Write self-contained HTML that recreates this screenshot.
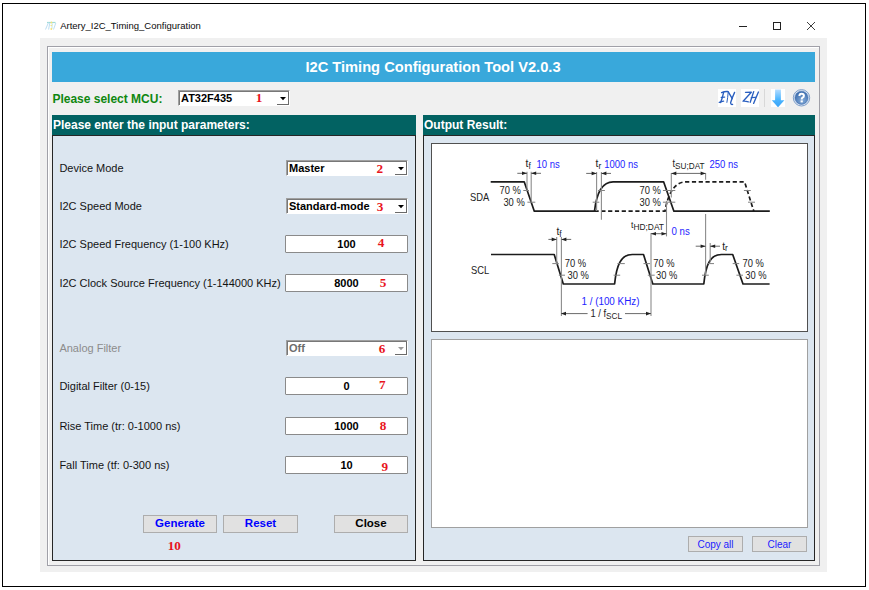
<!DOCTYPE html>
<html><head><meta charset="utf-8"><style>
html,body{margin:0;padding:0;}
body{width:869px;height:590px;overflow:hidden;position:relative;background:#fff;font-family:"Liberation Sans",sans-serif;}
.b{position:absolute;}
.t{position:absolute;white-space:nowrap;}
</style></head><body>
<div class="b" style="left:2px;top:3px;width:864px;height:584px;border:1px solid #000;background:#fff;box-sizing:border-box;"></div>
<svg class="b" style="left:0;top:0" width="869" height="590" viewBox="0 0 869 590" opacity="0.75">
<path d="M47 22.5 H55.5" stroke="#7fd0c8" stroke-width="1.2"/>
<path d="M48.5 22.5 L45.5 29.5 M49.8 23 L48.6 29.5" stroke="#a8d4ee" stroke-width="1"/>
<path d="M55.8 23 L53.5 29.5" stroke="#a8d4ee" stroke-width="1"/>
<path d="M52.3 23.5 L51.8 29" stroke="#9ad8d0" stroke-width="0.8"/>
<circle cx="51.4" cy="22.5" r="0.9" fill="#f4d84a"/><circle cx="51.2" cy="25.5" r="0.7" fill="#f4d84a"/><circle cx="51.3" cy="29" r="0.9" fill="#f4d84a"/>
</svg>
<div class="t" style="left:60.2px;top:21.46px;font-size:9.5px;line-height:9.5px;color:#0a0a0a;font-weight:normal;font-family:'Liberation Sans', sans-serif;">Artery_I2C_Timing_Configuration</div>
<div class="b" style="left:739px;top:26px;width:8px;height:1px;background:#222;"></div>
<div class="b" style="left:773px;top:22px;width:8px;height:8px;border:1px solid #222;box-sizing:border-box;"></div>
<svg class="b" style="left:806px;top:21px" width="10" height="10" viewBox="0 0 10 10">
<path d="M1 1 L9 9 M9 1 L1 9" stroke="#2a2a2a" stroke-width="0.9" fill="none"/></svg>
<div class="b" style="left:40px;top:38px;width:787px;height:534px;background:#f0f0f0;"></div>
<div class="b" style="left:47px;top:46px;width:773px;height:520px;border:1px solid #a0a0a8;box-sizing:border-box;box-shadow:inset 1px 1px 0 #fff;"></div>
<div class="b" style="left:52px;top:52px;width:763px;height:30px;background:#39a8db;"></div>
<div class="t" style="left:133px;width:600px;text-align:center;top:60.08px;font-size:14.67px;line-height:14.67px;color:#fff;font-weight:bold;font-family:'Liberation Sans', sans-serif;">I2C Timing Configuration Tool V2.0.3</div>
<div class="t" style="left:52.4px;top:93.04px;font-size:12px;line-height:12px;color:#0f870f;font-weight:bold;font-family:'Liberation Sans', sans-serif;">Please select MCU:</div>
<div class="b" style="left:178px;top:90px;width:112px;height:16px;background:#fff;border-top:1px solid #a0a0a0;border-left:1px solid #a0a0a0;border-right:1px solid #fff;border-bottom:1px solid #fff;box-sizing:border-box;box-shadow:inset 1px 1px 0 #787878;"></div>
<div class="b" style="left:277px;top:92px;width:12px;height:13px;border-right:1px solid #6a6a6a;border-bottom:1px solid #6a6a6a;box-sizing:border-box;"></div>
<svg class="b" style="left:280px;top:97px" width="6" height="4" viewBox="0 0 6 4"><path d="M0 0 H6 L3 3.2 Z" fill="#000"/></svg>
<div class="t" style="left:181px;top:92.69px;font-size:11px;line-height:11px;color:#000;font-weight:bold;font-family:'Liberation Sans', sans-serif;">AT32F435</div>
<div class="b" style="left:718px;top:89px;width:18px;height:18px;background:#fff;"></div>
<div class="b" style="left:741px;top:89px;width:18px;height:18px;background:#fff;"></div>
<svg class="b" style="left:0;top:0" width="869" height="590" viewBox="0 0 869 590"><g stroke="#2a5fc0" stroke-width="1.35" fill="none" stroke-linecap="round" stroke-linejoin="round">
<path d="M721.6 92.6 Q724.5 91.3 727.6 91.5"/>
<path d="M723.6 92.4 Q722.6 97.5 720.6 102.6"/>
<path d="M721.3 97.4 L724.6 97.1"/>
<path d="M719.3 102.4 Q721.5 101.6 723.6 101.1"/>
<path d="M728.2 92.0 Q727.8 97.5 726.9 102.4" stroke-width="1"/>
<path d="M728.3 91.8 Q730.5 95.5 732.2 98.6"/>
<path d="M734.6 92.4 Q732.2 97.5 730.6 102.8 Q730.8 104.8 732.6 104.4"/>
<path d="M745.5 92.3 L751.3 92.2 L743.1 101.2 Q745.5 101 748.3 101.8"/>
<path d="M753.7 91.6 L750.2 102.3"/>
<path d="M758.4 92 L753.6 103.4"/>
<path d="M751.3 97.6 L755.4 97.3"/>
</g></svg>
<div class="b" style="left:764px;top:89px;width:1px;height:18px;background:#d8d8d8;"></div>
<div class="b" style="left:771px;top:89px;width:14px;height:18px;background:#fff;"></div>
<svg class="b" style="left:771px;top:89px" width="14" height="18" viewBox="0 0 14 18">
<defs><linearGradient id="ag" x1="0" y1="0" x2="0" y2="1"><stop offset="0" stop-color="#b4dcff"/><stop offset="0.55" stop-color="#4cb6ff"/><stop offset="1" stop-color="#3aa2f6"/></linearGradient></defs>
<path d="M4.1 0.6 H9.9 V11.2 H13.4 L7.0 18.3 L0.8 11.2 H4.1 Z" fill="url(#ag)"/></svg>
<svg class="b" style="left:792px;top:88px" width="19" height="20" viewBox="0 0 19 20">
<defs><radialGradient id="hg" cx="0.55" cy="0.7" r="0.75"><stop offset="0" stop-color="#86acd8"/><stop offset="1" stop-color="#3264a8"/></radialGradient></defs>
<circle cx="9.5" cy="9.8" r="8.2" fill="#dde6f2" stroke="#7f9fca" stroke-width="1"/>
<circle cx="9.5" cy="9.8" r="6.6" fill="url(#hg)" stroke="#3f6cae" stroke-width="0.5"/>
<path d="M7.4 8.1 Q7.4 5.7 9.6 5.7 Q11.9 5.7 11.9 7.7 Q11.9 9.0 10.6 9.6 Q9.7 10.1 9.7 11.4" stroke="#fff" stroke-width="2" fill="none"/>
<rect x="8.6" y="12.4" width="2.2" height="2" fill="#fff"/></svg>
<div class="b" style="left:52px;top:115px;width:364px;height:20px;background:#026262;"></div>
<div class="t" style="left:53px;top:118.84px;font-size:12px;line-height:12px;color:#fff;font-weight:bold;font-family:'Liberation Sans', sans-serif;">Please enter the input parameters:</div>
<div class="b" style="left:52px;top:135px;width:364px;height:426px;background:#dce6f0;border:1px solid #262626;box-sizing:border-box;"></div>
<div class="b" style="left:423px;top:115px;width:392px;height:20px;background:#026262;"></div>
<div class="t" style="left:424px;top:118.84px;font-size:12px;line-height:12px;color:#fff;font-weight:bold;font-family:'Liberation Sans', sans-serif;">Output Result:</div>
<div class="b" style="left:423px;top:135px;width:392px;height:426px;background:#dce6f0;border:1px solid #262626;box-sizing:border-box;"></div>
<div class="b" style="left:431px;top:143px;width:377px;height:189px;background:#fff;border:1px solid #505050;box-sizing:border-box;"></div>
<svg class="b" style="left:0;top:0" width="869" height="590" viewBox="0 0 869 590"><path d="M490.7 181.8 H524.2 L534.3 211.2 H594.5 C596.5 193 602 181.8 613.1 181.8 H663.6 L673.9 211.2 H769.8" stroke="#1c1c1c" stroke-width="1.7" fill="none" stroke-linejoin="round"/>
<path d="M594.5 211.2 H665 C667.5 196 673.5 181.8 686 181.8 H744.6 L753.8 211.2" stroke="#1c1c1c" stroke-width="1.7" fill="none" stroke-dasharray="4.2 2.6"/>
<path d="M491 254.5 H554.2 L563.3 284 H614.6 C616.5 265 621 254.5 632.3 254.5 H643.5 L652.8 284 H703.8 C705.7 265 710 254.5 721.5 254.5 H732.7 L743 284 H769.6" stroke="#1c1c1c" stroke-width="1.7" fill="none" stroke-linejoin="round"/>
<path d="M523.3 190.5 H529" stroke="#808080" stroke-width="1"/>
<path d="M527.4 202.2 H535.3" stroke="#808080" stroke-width="1"/>
<path d="M598 190.5 H604.9" stroke="#808080" stroke-width="1"/>
<path d="M592.7 202.2 H599.3" stroke="#808080" stroke-width="1"/>
<path d="M662.9 190.5 H675.3" stroke="#808080" stroke-width="1"/>
<path d="M662.9 202.2 H675.3" stroke="#808080" stroke-width="1"/>
<path d="M743.9 190.5 H750.8" stroke="#808080" stroke-width="1"/>
<path d="M748 202.2 H755" stroke="#808080" stroke-width="1"/>
<path d="M552.3 263.6 H558.8" stroke="#808080" stroke-width="1"/>
<path d="M558.8 275.2 H565" stroke="#808080" stroke-width="1"/>
<path d="M617.4 263.6 H624.8" stroke="#808080" stroke-width="1"/>
<path d="M613.6 275.2 H620.2" stroke="#808080" stroke-width="1"/>
<path d="M643.5 263.6 H650" stroke="#808080" stroke-width="1"/>
<path d="M647.8 275.2 H654.7" stroke="#808080" stroke-width="1"/>
<path d="M707.5 263.6 H714" stroke="#808080" stroke-width="1"/>
<path d="M702 275.2 H708.8" stroke="#808080" stroke-width="1"/>
<path d="M732.7 263.6 H739.2" stroke="#808080" stroke-width="1"/>
<path d="M736.4 275.2 H743" stroke="#808080" stroke-width="1"/>
<path d="M527 171.8 V190.5" stroke="#8c8c8c" stroke-width="1.1"/>
<path d="M531.2 171.8 V202.5" stroke="#8c8c8c" stroke-width="1.1"/>
<path d="M596.6 172 V211" stroke="#8c8c8c" stroke-width="1.1"/>
<path d="M601.4 172 V219.7" stroke="#8c8c8c" stroke-width="1.1"/>
<path d="M671.3 173 V197.4" stroke="#8c8c8c" stroke-width="1.1"/>
<path d="M705.6 173 V179.8" stroke="#8c8c8c" stroke-width="1.1"/>
<path d="M666.5 201 V236.4" stroke="#8c8c8c" stroke-width="1.1"/>
<path d="M651 233.1 V316" stroke="#8c8c8c" stroke-width="1.1"/>
<path d="M556.7 237 V265" stroke="#8c8c8c" stroke-width="1.1"/>
<path d="M561.4 237 V316" stroke="#8c8c8c" stroke-width="1.1"/>
<path d="M705.6 214 V275" stroke="#8c8c8c" stroke-width="1.1"/>
<path d="M710.2 243 V262.5" stroke="#8c8c8c" stroke-width="1.1"/>
<path d="M517.3 173.3 H527" stroke="#6a6a6a" stroke-width="1"/>
<path d="M527 173.3 L522 171.5 L522 175.10000000000002 Z" fill="#222"/>
<path d="M541 173.3 H531.2" stroke="#6a6a6a" stroke-width="1"/>
<path d="M531.2 173.3 L536.2 171.5 L536.2 175.10000000000002 Z" fill="#222"/>
<path d="M586.2 173.4 H596.6" stroke="#6a6a6a" stroke-width="1"/>
<path d="M596.6 173.4 L591.6 171.6 L591.6 175.20000000000002 Z" fill="#222"/>
<path d="M611 173.4 H601.4" stroke="#6a6a6a" stroke-width="1"/>
<path d="M601.4 173.4 L606.4 171.6 L606.4 175.20000000000002 Z" fill="#222"/>
<path d="M548.4 239.4 H556.7" stroke="#6a6a6a" stroke-width="1"/>
<path d="M556.7 239.4 L551.7 237.6 L551.7 241.20000000000002 Z" fill="#222"/>
<path d="M571.2 239.4 H561.4" stroke="#6a6a6a" stroke-width="1"/>
<path d="M561.4 239.4 L566.4 237.6 L566.4 241.20000000000002 Z" fill="#222"/>
<path d="M695.7 246.2 H705.6" stroke="#6a6a6a" stroke-width="1"/>
<path d="M705.6 246.2 L700.6 244.39999999999998 L700.6 248.0 Z" fill="#222"/>
<path d="M720 246.2 H710.2" stroke="#6a6a6a" stroke-width="1"/>
<path d="M710.2 246.2 L715.2 244.39999999999998 L715.2 248.0 Z" fill="#222"/>
<path d="M671.3 173.4 H705.6" stroke="#6a6a6a" stroke-width="1"/>
<path d="M671.3 173.4 L676.3 171.6 L676.3 175.20000000000002 Z" fill="#222"/>
<path d="M705.6 173.4 L700.6 171.6 L700.6 175.20000000000002 Z" fill="#222"/>
<path d="M651 233.7 H666.5" stroke="#6a6a6a" stroke-width="1"/>
<path d="M651 233.7 L656 231.89999999999998 L656 235.5 Z" fill="#222"/>
<path d="M666.5 233.7 L661.5 231.89999999999998 L661.5 235.5 Z" fill="#222"/>
<path d="M561 313.6 H587.6 M625 313.6 H651" stroke="#6a6a6a" stroke-width="1"/>
<path d="M561 313.6 L566 311.8 L566 315.40000000000003 Z" fill="#222"/>
<path d="M651 313.6 L646 311.8 L646 315.40000000000003 Z" fill="#222"/>
<text transform="translate(470 201.2) scale(1 1.12)" font-size="9.4" fill="#222222" font-family="Liberation Sans, sans-serif">SDA</text>
<text transform="translate(471 273.8) scale(1 1.12)" font-size="9.4" fill="#222222" font-family="Liberation Sans, sans-serif">SCL</text>
<text transform="translate(499.5 193.9) scale(1 1.12)" font-size="9.4" fill="#222222" font-family="Liberation Sans, sans-serif">70 %</text>
<text transform="translate(503.4 206) scale(1 1.12)" font-size="9.4" fill="#222222" font-family="Liberation Sans, sans-serif">30 %</text>
<text transform="translate(639.5 194) scale(1 1.12)" font-size="9.4" fill="#222222" font-family="Liberation Sans, sans-serif">70 %</text>
<text transform="translate(639.5 206) scale(1 1.12)" font-size="9.4" fill="#222222" font-family="Liberation Sans, sans-serif">30 %</text>
<text transform="translate(564.7 267.2) scale(1 1.12)" font-size="9.4" fill="#222222" font-family="Liberation Sans, sans-serif">70 %</text>
<text transform="translate(567.5 279) scale(1 1.12)" font-size="9.4" fill="#222222" font-family="Liberation Sans, sans-serif">30 %</text>
<text transform="translate(653.2 267.2) scale(1 1.12)" font-size="9.4" fill="#222222" font-family="Liberation Sans, sans-serif">70 %</text>
<text transform="translate(656 279) scale(1 1.12)" font-size="9.4" fill="#222222" font-family="Liberation Sans, sans-serif">30 %</text>
<text transform="translate(742.5 267) scale(1 1.12)" font-size="9.4" fill="#222222" font-family="Liberation Sans, sans-serif">70 %</text>
<text transform="translate(745.3 279) scale(1 1.12)" font-size="9.4" fill="#222222" font-family="Liberation Sans, sans-serif">30 %</text>
<text transform="translate(525.6 167.1) scale(1 1.08)" font-size="10.3" fill="#222222" font-family="Liberation Sans, sans-serif">t<tspan font-size="8.3" dx="0" dy="1.7">f</tspan></text>
<text transform="translate(595.6 167.1) scale(1 1.08)" font-size="10.3" fill="#222222" font-family="Liberation Sans, sans-serif">t<tspan font-size="8.3" dx="0" dy="1.7">r</tspan></text>
<text transform="translate(672.5 166.5) scale(1 1.08)" font-size="9.3" fill="#222222" font-family="Liberation Sans, sans-serif">t<tspan font-size="8.2" dx="0" dy="1.9">SU;DAT</tspan></text>
<text transform="translate(631 227.5) scale(1 1.08)" font-size="8.6" fill="#222222" font-family="Liberation Sans, sans-serif">t<tspan font-size="8.4" dx="0" dy="2.4">HD;DAT</tspan></text>
<text transform="translate(556.4 235.2) scale(1 1.08)" font-size="10.3" fill="#222222" font-family="Liberation Sans, sans-serif">t<tspan font-size="8.3" dx="0" dy="1.7">f</tspan></text>
<text transform="translate(722.2 249.5) scale(1 1.08)" font-size="10.3" fill="#222222" font-family="Liberation Sans, sans-serif">t<tspan font-size="8.3" dx="0" dy="1.7">r</tspan></text>
<text transform="translate(536.5 167.7) scale(1 1.12)" font-size="9.5" fill="#1e1eff" font-family="Liberation Sans, sans-serif">10 ns</text>
<text transform="translate(604.2 167.7) scale(1 1.12)" font-size="9.5" fill="#1e1eff" font-family="Liberation Sans, sans-serif">1000 ns</text>
<text transform="translate(709.4 167.7) scale(1 1.12)" font-size="9.5" fill="#1e1eff" font-family="Liberation Sans, sans-serif">250 ns</text>
<text transform="translate(671.5 234.7) scale(1 1.12)" font-size="9.7" fill="#1e1eff" font-family="Liberation Sans, sans-serif">0 ns</text>
<text transform="translate(581.5 304.5) scale(1 1.12)" font-size="9.85" fill="#1e1eff" font-family="Liberation Sans, sans-serif">1 / (100 KHz)</text>
<text transform="translate(590.4 316.8) scale(1 1.12)" font-size="9.4" fill="#222222" font-family="Liberation Sans, sans-serif">1 / f<tspan font-size="8.2" dy="1.8">SCL</tspan></text></svg>
<div class="b" style="left:431px;top:339px;width:377px;height:189px;background:#fff;border:1px solid #a0a0a0;box-sizing:border-box;"></div>
<div class="b" style="left:688px;top:536px;width:55px;height:16px;background:#e1e1e1;border:1px solid #adadad;box-sizing:border-box;"></div>
<div class="t" style="left:415.5px;width:600px;text-align:center;top:540.03px;font-size:10px;line-height:10px;color:#1c1cff;font-weight:normal;font-family:'Liberation Sans', sans-serif;">Copy all</div>
<div class="b" style="left:752px;top:536px;width:55px;height:16px;background:#e1e1e1;border:1px solid #adadad;box-sizing:border-box;"></div>
<div class="t" style="left:479.5px;width:600px;text-align:center;top:540.03px;font-size:10px;line-height:10px;color:#1c1cff;font-weight:normal;font-family:'Liberation Sans', sans-serif;">Clear</div>
<div class="t" style="left:59.4px;top:162.69px;font-size:11px;line-height:11px;color:#141414;font-weight:normal;font-family:'Liberation Sans', sans-serif;">Device Mode</div>
<div class="t" style="left:59.4px;top:200.69px;font-size:11px;line-height:11px;color:#141414;font-weight:normal;font-family:'Liberation Sans', sans-serif;">I2C Speed Mode</div>
<div class="t" style="left:59.4px;top:238.69px;font-size:11px;line-height:11px;color:#141414;font-weight:normal;font-family:'Liberation Sans', sans-serif;">I2C Speed Frequency (1-100 KHz)</div>
<div class="t" style="left:59.4px;top:278.19px;font-size:11px;line-height:11px;color:#141414;font-weight:normal;font-family:'Liberation Sans', sans-serif;">I2C Clock Source Frequency (1-144000 KHz)</div>
<div class="t" style="left:59.4px;top:343.29px;font-size:11px;line-height:11px;color:#8c8c8c;font-weight:normal;font-family:'Liberation Sans', sans-serif;">Analog Filter</div>
<div class="t" style="left:59.4px;top:381.29px;font-size:11px;line-height:11px;color:#141414;font-weight:normal;font-family:'Liberation Sans', sans-serif;">Digital Filter (0-15)</div>
<div class="t" style="left:59.4px;top:420.89px;font-size:11px;line-height:11px;color:#141414;font-weight:normal;font-family:'Liberation Sans', sans-serif;">Rise Time (tr: 0-1000 ns)</div>
<div class="t" style="left:59.4px;top:459.99px;font-size:11px;line-height:11px;color:#141414;font-weight:normal;font-family:'Liberation Sans', sans-serif;">Fall Time (tf: 0-300 ns)</div>
<div class="b" style="left:286px;top:160px;width:122px;height:16px;background:#fff;border-top:1px solid #a0a0a0;border-left:1px solid #a0a0a0;border-right:1px solid #fff;border-bottom:1px solid #fff;box-sizing:border-box;box-shadow:inset 1px 1px 0 #787878;"></div>
<div class="b" style="left:395px;top:162px;width:12px;height:13px;border-right:1px solid #6a6a6a;border-bottom:1px solid #6a6a6a;box-sizing:border-box;"></div>
<svg class="b" style="left:398px;top:167px" width="6" height="4" viewBox="0 0 6 4"><path d="M0 0 H6 L3 3.2 Z" fill="#000"/></svg>
<div class="t" style="left:289px;top:162.69px;font-size:11px;line-height:11px;color:#000;font-weight:bold;font-family:'Liberation Sans', sans-serif;">Master</div>
<div class="b" style="left:286px;top:198px;width:122px;height:16px;background:#fff;border-top:1px solid #a0a0a0;border-left:1px solid #a0a0a0;border-right:1px solid #fff;border-bottom:1px solid #fff;box-sizing:border-box;box-shadow:inset 1px 1px 0 #787878;"></div>
<div class="b" style="left:395px;top:200px;width:12px;height:13px;border-right:1px solid #6a6a6a;border-bottom:1px solid #6a6a6a;box-sizing:border-box;"></div>
<svg class="b" style="left:398px;top:205px" width="6" height="4" viewBox="0 0 6 4"><path d="M0 0 H6 L3 3.2 Z" fill="#000"/></svg>
<div class="t" style="left:289px;top:200.69px;font-size:11px;line-height:11px;color:#000;font-weight:bold;font-family:'Liberation Sans', sans-serif;">Standard-mode</div>
<div class="b" style="left:286px;top:340px;width:122px;height:16px;background:#fff;border-top:1px solid #a0a0a0;border-left:1px solid #a0a0a0;border-right:1px solid #fff;border-bottom:1px solid #fff;box-sizing:border-box;box-shadow:inset 1px 1px 0 #787878;"></div>
<div class="b" style="left:395px;top:342px;width:12px;height:13px;border-right:1px solid #6a6a6a;border-bottom:1px solid #6a6a6a;box-sizing:border-box;"></div>
<svg class="b" style="left:398px;top:347px" width="6" height="4" viewBox="0 0 6 4"><path d="M0 0 H6 L3 3.2 Z" fill="#9a9a9a"/></svg>
<div class="t" style="left:289px;top:342.69px;font-size:11px;line-height:11px;color:#6d6d6d;font-weight:bold;font-family:'Liberation Sans', sans-serif;">Off</div>
<div class="b" style="left:285px;top:235px;width:123px;height:18px;background:#fff;border:1px solid #8a8a8a;box-sizing:border-box;border-radius:1px;"></div>
<div class="t" style="left:46.5px;width:600px;text-align:center;top:238.89px;font-size:11px;line-height:11px;color:#000;font-weight:bold;font-family:'Liberation Sans', sans-serif;">100</div>
<div class="b" style="left:285px;top:274px;width:123px;height:18px;background:#fff;border:1px solid #8a8a8a;box-sizing:border-box;border-radius:1px;"></div>
<div class="t" style="left:46.5px;width:600px;text-align:center;top:277.89px;font-size:11px;line-height:11px;color:#000;font-weight:bold;font-family:'Liberation Sans', sans-serif;">8000</div>
<div class="b" style="left:285px;top:377px;width:123px;height:18px;background:#fff;border:1px solid #8a8a8a;box-sizing:border-box;border-radius:1px;"></div>
<div class="t" style="left:46.5px;width:600px;text-align:center;top:380.89px;font-size:11px;line-height:11px;color:#000;font-weight:bold;font-family:'Liberation Sans', sans-serif;">0</div>
<div class="b" style="left:285px;top:417px;width:123px;height:18px;background:#fff;border:1px solid #8a8a8a;box-sizing:border-box;border-radius:1px;"></div>
<div class="t" style="left:46.5px;width:600px;text-align:center;top:420.89px;font-size:11px;line-height:11px;color:#000;font-weight:bold;font-family:'Liberation Sans', sans-serif;">1000</div>
<div class="b" style="left:285px;top:456px;width:123px;height:18px;background:#fff;border:1px solid #8a8a8a;box-sizing:border-box;border-radius:1px;"></div>
<div class="t" style="left:46.5px;width:600px;text-align:center;top:459.89px;font-size:11px;line-height:11px;color:#000;font-weight:bold;font-family:'Liberation Sans', sans-serif;">10</div>
<div class="b" style="left:143px;top:515px;width:74px;height:18px;background:#e1e1e1;border:1px solid #adadad;box-sizing:border-box;"></div>
<div class="t" style="left:-120.0px;width:600px;text-align:center;top:517.77px;font-size:11.5px;line-height:11.5px;color:#0000ff;font-weight:bold;font-family:'Liberation Sans', sans-serif;">Generate</div>
<div class="b" style="left:223px;top:515px;width:75px;height:18px;background:#e1e1e1;border:1px solid #adadad;box-sizing:border-box;"></div>
<div class="t" style="left:-39.5px;width:600px;text-align:center;top:517.77px;font-size:11.5px;line-height:11.5px;color:#0000ff;font-weight:bold;font-family:'Liberation Sans', sans-serif;">Reset</div>
<div class="b" style="left:334px;top:515px;width:74px;height:18px;background:#e1e1e1;border:1px solid #adadad;box-sizing:border-box;"></div>
<div class="t" style="left:71.0px;width:600px;text-align:center;top:517.77px;font-size:11.5px;line-height:11.5px;color:#000;font-weight:bold;font-family:'Liberation Sans', sans-serif;">Close</div>
<div class="t" style="left:255.7px;top:91.34px;font-size:13.2px;line-height:13.2px;color:#e8141c;font-weight:bold;font-family:'Liberation Serif', serif;">1</div>
<div class="t" style="left:376.59999999999997px;top:162.34px;font-size:13.2px;line-height:13.2px;color:#e8141c;font-weight:bold;font-family:'Liberation Serif', serif;">2</div>
<div class="t" style="left:376.7px;top:200.04px;font-size:13.2px;line-height:13.2px;color:#e8141c;font-weight:bold;font-family:'Liberation Serif', serif;">3</div>
<div class="t" style="left:377.7px;top:235.94px;font-size:13.2px;line-height:13.2px;color:#e8141c;font-weight:bold;font-family:'Liberation Serif', serif;">4</div>
<div class="t" style="left:379.7px;top:276.04px;font-size:13.2px;line-height:13.2px;color:#e8141c;font-weight:bold;font-family:'Liberation Serif', serif;">5</div>
<div class="t" style="left:378.7px;top:342.04px;font-size:13.2px;line-height:13.2px;color:#e8141c;font-weight:bold;font-family:'Liberation Serif', serif;">6</div>
<div class="t" style="left:379.09999999999997px;top:377.75px;font-size:13.2px;line-height:13.2px;color:#e8141c;font-weight:bold;font-family:'Liberation Serif', serif;">7</div>
<div class="t" style="left:379.7px;top:419.44px;font-size:13.2px;line-height:13.2px;color:#e8141c;font-weight:bold;font-family:'Liberation Serif', serif;">8</div>
<div class="t" style="left:381.4px;top:459.54px;font-size:13.2px;line-height:13.2px;color:#e8141c;font-weight:bold;font-family:'Liberation Serif', serif;">9</div>
<div class="t" style="left:167.7px;top:539.35px;font-size:13.2px;line-height:13.2px;color:#e8141c;font-weight:bold;font-family:'Liberation Serif', serif;">10</div>
</body></html>
